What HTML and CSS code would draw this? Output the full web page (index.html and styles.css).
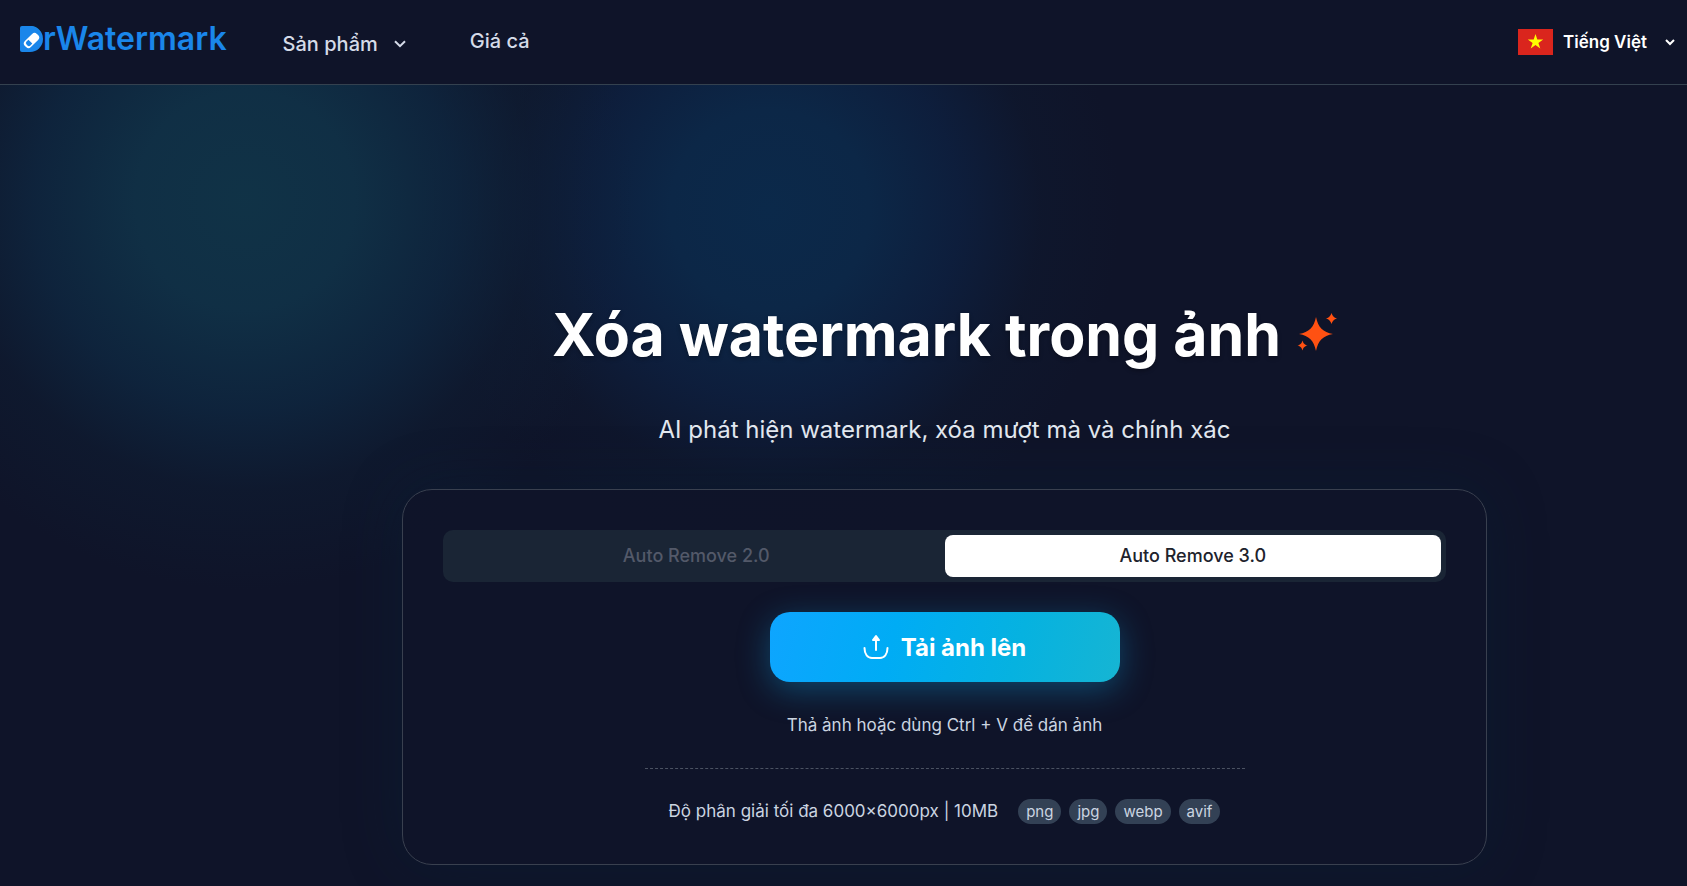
FILE: index.html
```
<!DOCTYPE html>
<html lang="vi">
<head>
    <meta charset="UTF-8">
    <meta name="viewport" content="width=device-width, initial-scale=1.0">
    <title>DrWatermark</title>
    <link rel="stylesheet" href="styles.css">
</head>
<body>
    <header class="header">
      <a class="logo" href="#"><span class="logo-mark">D<svg class="pill" viewBox="0 0 16 16" width="17" height="17" aria-hidden="true">
        <g transform="rotate(-45 8 8)">
          <rect x="0" y="4" width="16" height="8" rx="3.2" fill="#fff"/>
          <path d="M6.500 5.400H4A2 2 0 0 0 2 7.400v1.200a2 2 0 0 0 2 2h2.500z" fill="#1a86ea"/>
        </g>
      </svg></span>rWatermark</a>

      <nav class="nav">
        <button type="button" class="nav-item nav-menu">Sản phẩm
          <svg width="12" height="8" viewBox="0 0 12 8" aria-hidden="true"><path d="M1 1.200l5 5 5-5" fill="none" stroke="currentColor" stroke-width="2"/></svg>
        </button>
        <a class="nav-item" href="#">Giá cả</a>
      </nav>

      <button type="button" class="language">
        <svg class="flag" width="35" height="26" viewBox="0 0 35 26" aria-hidden="true">
          <rect width="35" height="26" fill="#da251d"/>
          <path d="M17.500 5l1.800 5.600h5.900l-4.800 3.400 1.900 5.600-4.800-3.500-4.800 3.500 1.900-5.600-4.800-3.400h5.900z" fill="#ff0"/>
        </svg>
        Tiếng Việt
        <svg class="chevron" width="10" height="7" viewBox="0 0 10 7" aria-hidden="true"><path d="M1 1l4 4 4-4" fill="none" stroke="currentColor" stroke-width="2"/></svg>
      </button>
    </header>

    <main class="hero">
      <h1 class="title">Xóa watermark trong ảnh
        <svg class="sparkle" width="40" height="40" viewBox="0 0 40 40" aria-hidden="true">
          <path d="M19 4C21 14 26 19.500 36 21 26 22.500 21 28 19 38 17 28 12 22.500 2 21 12 19.500 17 14 19 4z"/>
          <path d="M34.500 0C35.500 3.200 36.800 4.500 40 5.500 36.800 6.500 35.500 7.800 34.500 11 33.500 7.800 32.200 6.500 29 5.500 32.200 4.500 33.500 3.200 34.500 0z"/>
          <path d="M5.500 27.500C6.400 30.600 7.400 31.600 10.500 32.500 7.400 33.400 6.400 34.400 5.500 37.500 4.600 34.400 3.600 33.400 .5 32.500 3.600 31.600 4.600 30.600 5.500 27.500z"/>
        </svg>
      </h1>
      <p class="subtitle">AI phát hiện watermark, xóa mượt mà và chính xác</p>

      <section class="card">
        <div class="tabs">
          <button type="button" class="tab">Auto Remove 2.0</button>
          <button type="button" class="tab active">Auto Remove 3.0</button>
        </div>

        <button type="button" class="upload">
          <svg width="26" height="26" viewBox="0 0 26 26" fill="none" stroke="currentColor" stroke-width="2" stroke-linecap="round" aria-hidden="true">
            <path d="M1.500 14c0 6 3 10 7.500 10h8c4.500 0 7.500-4 7.500-10"/>
            <path d="M13 16V5"/>
            <path d="M13 2l3 4h-6z" fill="currentColor" stroke-linejoin="round"/>
          </svg>
          Tải ảnh lên
        </button>

        <p class="hint">Thả ảnh hoặc dùng Ctrl + V để dán ảnh</p>

        <div class="info">
          <span class="limit">Độ phân giải tối đa 6000×6000px | 10MB</span>
          <ul class="formats">
            <li>png</li>
            <li>jpg</li>
            <li>webp</li>
            <li>avif</li>
          </ul>
        </div>
      </section>
    </main>
</body>
</html>
```

FILE: styles.css
```
* {
  box-sizing: border-box;
}

body {
  margin: 0;
  min-height: 100vh;
  font-family: Inter, "Noto Sans", sans-serif;
  color: #fff;
  background-color: #0f1429;
  background-image:
    radial-gradient(circle at 245px 200px, rgba(16, 52, 72, 0.95) 0, rgba(16, 50, 72, 0.9) 110px, rgba(14, 42, 68, 0.7) 210px, rgba(14, 32, 54, 0.4) 290px, rgba(15, 20, 41, 0) 390px),
    radial-gradient(circle at 770px 210px, #0b294a 0, #0c2747 100px, rgba(13, 34, 68, 0.7) 190px, rgba(14, 28, 52, 0.3) 270px, rgba(15, 20, 41, 0) 350px);
  background-repeat: no-repeat;
}

button {
  font-family: inherit;
  color: inherit;
  background: none;
  border: none;
  padding: 0;
  cursor: pointer;
}

.header {
  display: flex;
  align-items: center;
  height: 85px;
  padding: 0 12px 0 20px;
  background-color: #0f1429;
  border-bottom: 1px solid #34414f;
}

.logo {
  font-size: 32px;
  font-weight: 600;
  line-height: 40px;
  margin-bottom: 6px;
  color: #1a86ea;
  text-decoration: none;
}

.logo-mark {
  position: relative;
  display: inline-block;
  line-height: 26px;
  background-color: #1a86ea;
  border-radius: 2px 13px 13px 2px;
}

.pill {
  position: absolute;
  left: 3px;
  top: 6px;
}

.nav {
  display: flex;
  align-items: flex-start;
  gap: 64px;
  margin-left: 56px;
}

.nav-item {
  display: flex;
  align-items: center;
  gap: 16px;
  font-size: 20px;
  font-weight: 500;
  line-height: 26px;
  color: #d5dbe8;
  text-decoration: none;
}

.nav-menu {
  padding-top: 3px;
}

.language {
  display: flex;
  align-items: center;
  gap: 10px;
  margin-left: auto;
  font-size: 17px;
  font-weight: 600;
  line-height: 26px;
}

.chevron {
  margin-left: 8px;
}

.hero {
  display: flex;
  flex-direction: column;
  align-items: center;
  padding: 210px 0 22px 202px;
}

.title {
  display: flex;
  align-items: center;
  gap: 16px;
  margin: 0;
  font-size: 59px;
  font-weight: 700;
  line-height: 80px;
  text-shadow: 0 2px 4px rgba(0, 0, 0, 0.3);
}

.sparkle {
  margin-bottom: 4px;
  fill: #ff5112;
}

.subtitle {
  margin: 37px 0 41px;
  font-size: 24px;
  line-height: 36px;
  color: #e2e8f0;
}

.card {
  display: flex;
  flex-direction: column;
  align-items: center;
  width: 100%;
  max-width: 1085px;
  padding: 40px;
  border: 1px solid #39404f;
  border-radius: 30px;
  background-color: rgba(15, 20, 41, 0.8);
  box-shadow: 0 0 60px rgba(8, 40, 60, 0.3);
}

.tabs {
  display: flex;
  width: 100%;
  padding: 5px;
  border-radius: 10px;
  background-color: #1a2535;
}

.tab {
  flex: 1;
  font-size: 18px;
  font-weight: 500;
  line-height: 42px;
  border-radius: 8px;
  color: #535969;
}

.tab.active {
  background-color: #fff;
  color: #20222c;
}

.upload {
  display: flex;
  align-items: center;
  justify-content: center;
  gap: 12px;
  width: 350px;
  height: 70px;
  margin-top: 30px;
  border-radius: 20px;
  font-size: 24px;
  font-weight: 700;
  background-image: linear-gradient(105deg, #0ea5ff 0%, #00acf5 35%, #06b2e0 70%, #16b5d3 100%);
  box-shadow: 0 8px 32px rgba(14, 165, 233, 0.35);
}

.hint {
  margin: 30px 0;
  font-size: 17px;
  line-height: 26px;
  color: #cbd5e1;
}

.info {
  display: flex;
  align-items: center;
  justify-content: center;
  gap: 20px;
  width: 100%;
  max-width: 600px;
  padding-top: 29px;
  border-top: 1px dashed #4b5262;
}

.limit {
  font-size: 17px;
  line-height: 26px;
  color: #cbd5e1;
}

.formats {
  display: flex;
  gap: 8px;
  margin: 0;
  padding: 0;
  list-style: none;
}

.formats li {
  padding: 0 8px;
  border-radius: 13px;
  font-size: 15px;
  line-height: 25px;
  color: #cbd5e1;
  background-color: #334155;
}
```
